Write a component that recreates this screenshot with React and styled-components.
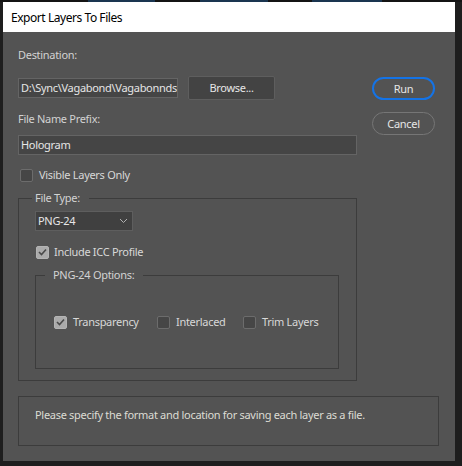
import React from "react";
import styled, { createGlobalStyle } from "styled-components";

const Global = createGlobalStyle`
  html, body { margin: 0; padding: 0; background: #1e1e1e; }
  body { font-family: "Noto Sans", "Open Sans", sans-serif; }
  * { box-sizing: border-box; }
`;

const Screen = styled.div`
  width: 462px;
  height: 466px;
  display: flex;
  flex-direction: column;
  background: #1e1e1e;
  overflow: hidden;
`;

const TopStrip = styled.div`
  height: 2px;
  flex: none;
  display: flex;
  background: #141414;
`;

const StripSeg = styled.div`
  width: ${(p) => p.$w}px;
  margin-left: ${(p) => p.$ml}px;
  height: 2px;
  background: ${(p) => p.$c};
`;

const Window = styled.div`
  margin-left: 3px;
  width: 452px;
  height: 459px;
  flex: none;
  display: flex;
  flex-direction: column;
`;

const TitleBar = styled.div`
  height: 30px;
  flex: none;
  background: #ffffff;
  display: flex;
  align-items: center;
  padding-left: 8px;
  font-size: 12px;
  letter-spacing: -0.45px;
  color: #000;
`;

const Body = styled.div`
  flex: 1;
  background: #535353;
  padding: 15px 0 15px 15px;
  display: flex;
  flex-direction: column;
  font-size: 11px;
  letter-spacing: -0.3px;
  line-height: 16px;
  color: #d8d8d8;
  white-space: nowrap;
`;

const Top = styled.div`
  display: flex;
  gap: 15px;
`;

const Main = styled.div`
  width: 339px;
  display: flex;
  flex-direction: column;
`;

const Side = styled.div`
  display: flex;
  flex-direction: column;
  gap: 12px;
  padding-top: 30px;
`;

const Label = styled.div`
  margin-top: ${(p) => p.$mt || 0}px;
  color: #d2d2d2;
`;

const Row = styled.div`
  display: flex;
  align-items: center;
  gap: ${(p) => p.$gap ?? 10}px;
  margin-top: ${(p) => p.$mt || 0}px;
  padding-left: ${(p) => p.$pl || 0}px;
`;

const TextInput = styled.div`
  width: ${(p) => p.$w}px;
  height: 20px;
  flex: none;
  background: #454545;
  border: 1px solid #646464;
  color: #e6e6e6;
  padding-left: 2px;
  display: flex;
  align-items: center;
  overflow: hidden;
  margin-top: ${(p) => p.$mt || 0}px;
`;

const Button = styled.div`
  width: 87px;
  height: 24px;
  background: #434343;
  border: 1px solid #5e5e5e;
  border-radius: 2px;
  color: #e6e6e6;
  display: flex;
  align-items: center;
  justify-content: center;
`;

const PillButton = styled.div`
  width: 63px;
  height: 23px;
  border-radius: 12px;
  border: ${(p) => (p.$primary ? "2px solid #1473e6" : "1px solid #767676")};
  color: #e6e6e6;
  display: flex;
  align-items: center;
  justify-content: center;
`;

const Box = styled.span`
  width: 13px;
  height: 13px;
  border-radius: 2px;
  flex: none;
  display: inline-flex;
  align-items: center;
  justify-content: center;
  background: ${(p) => (p.$checked ? "#ababab" : "#464646")};
  border: 1px solid ${(p) => (p.$checked ? "#b4b4b4" : "#6c6c6c")};
`;

const CheckItem = styled.div`
  display: flex;
  align-items: center;
  gap: ${(p) => p.$gap || 6}px;
  width: ${(p) => (p.$w ? `${p.$w}px` : "auto")};
  flex: none;
`;

const Group = styled.fieldset`
  margin: ${(p) => p.$m || "0"};
  padding: ${(p) => p.$p || "0"};
  border: 1px solid #3c3c3c;
  min-width: 0;
`;

const Legend = styled.legend`
  margin-left: ${(p) => p.$ml}px;
  padding: ${(p) => p.$pad};
  line-height: 16px;
  color: #d2d2d2;
`;

const Select = styled.div`
  width: 98px;
  height: 20px;
  background: #404040;
  border: 1px solid #5e5e5e;
  color: #e6e6e6;
  display: flex;
  align-items: center;
  justify-content: space-between;
  padding: 0 4px 0 2px;
  margin-top: 5px;
`;

const Message = styled.div`
  width: 421px;
  height: 50px;
  flex: none;
  margin-top: 15px;
  border: 1px solid #3c3c3c;
  padding: 10px 0 0 16px;
  color: #dcdcd4;
`;

function Check({ checked }) {
  return (
    <Box $checked={checked}>
      {checked && (
        <svg width="9" height="8" viewBox="0 0 9 8">
          <path d="M1 4 L3.5 6.5 L8 1.5" fill="none" stroke="#4a4a4a" strokeWidth="1.6" />
        </svg>
      )}
    </Box>
  );
}

export default function App() {
  return (
    <>
      <Global />
      <Screen>
        <TopStrip>
          <StripSeg $ml={88} $w={67} $c="#1a3550" />
          <StripSeg $ml={45} $w={68} $c="#1a3550" />
          <StripSeg $ml={44} $w={70} $c="#1a3550" />
        </TopStrip>
        <Window>
          <TitleBar>Export Layers To Files</TitleBar>
          <Body>
            <Top>
              <Main>
                <Label>Destination:</Label>
                <Row $mt={13}>
                  <TextInput $w={160}>D:\Sync\Vagabond\Vagabonnds</TextInput>
                  <Button>Browse...</Button>
                </Row>
                <Label $mt={11}>File Name Prefix:</Label>
                <TextInput $w={339} $mt={8}>Hologram</TextInput>
                <Row $mt={12} $pl={2}>
                  <CheckItem>
                    <Check />
                    <span>Visible Layers Only</span>
                  </CheckItem>
                </Row>
                <Group $m="7px 0 0 0" $p="0 0 11px 16px">
                  <Legend $ml={-3} $pad="0 9px 0 3px">File Type:</Legend>
                  <Select>
                    <span>PNG-24</span>
                    <svg width="9" height="6" viewBox="0 0 9 6">
                      <path d="M1 1 L4.5 4.5 L8 1" fill="none" stroke="#b0b0b0" strokeWidth="1" />
                    </svg>
                  </Select>
                  <Row $mt={13} $pl={1}>
                    <CheckItem $gap={5}>
                      <Check checked />
                      <span>Include ICC Profile</span>
                    </CheckItem>
                  </Row>
                  <Group $m="7px 17px 0 0" $p="31px 0 38px 18px">
                    <Legend $ml={-9} $pad="0 9px 0 8px">PNG-24 Options:</Legend>
                    <Row $gap={0}>
                      <CheckItem $w={103}>
                        <Check checked />
                        <span>Transparency</span>
                      </CheckItem>
                      <CheckItem $w={86}>
                        <Check />
                        <span>Interlaced</span>
                      </CheckItem>
                      <CheckItem>
                        <Check />
                        <span>Trim Layers</span>
                      </CheckItem>
                    </Row>
                  </Group>
                </Group>
              </Main>
              <Side>
                <PillButton $primary>Run</PillButton>
                <PillButton>Cancel</PillButton>
              </Side>
            </Top>
            <Message>Please specify the format and location for saving each layer as a file.</Message>
          </Body>
        </Window>
      </Screen>
    </>
  );
}
